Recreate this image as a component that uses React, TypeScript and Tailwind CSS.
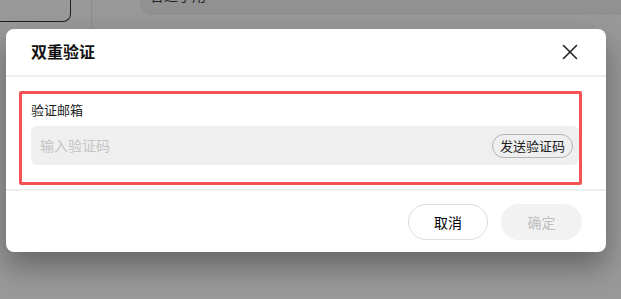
import { X } from 'lucide-react';

export default function App() {
  return (
    <div
      className="relative w-[621px] h-[299px] overflow-hidden bg-[#999999]"
      style={{ fontFamily: '"Noto Sans", "Noto Sans CJK SC", sans-serif' }}
    >
      {/* dimmed page behind the dialog */}
      <div className="flex items-start">
        <div className="w-[73px] h-[22px] -ml-[2px] border border-t-0 border-[#1f1f1f] rounded-br-lg" />
        <div className="w-px h-[40px] ml-[20px] bg-[#8c8c8c]" />
        <div className="flex-1 ml-[48px] h-[15px] bg-[#919191] rounded-bl-xl overflow-hidden pl-[10px]">
          <p className="text-[14px] leading-[14px] -mt-[11px] text-[#222]">合适于用</p>
        </div>
      </div>

      {/* dialog */}
      <div className="absolute left-[6px] top-[29px] w-[600px] bg-white rounded-lg shadow-[0_14px_30px_rgba(0,0,0,0.35)]">
        <div className="flex items-center justify-between h-[48px] pl-[25px] pr-[23px] border-b-2 border-[#eeeeee]">
          <h2 className="text-[16px] font-semibold text-[#111]">双重验证</h2>
          <X size={26} strokeWidth={1.4} className="text-[#222]" />
        </div>

        <div className="pt-[14px] pb-[4px] pl-[13px] pr-[24px] border-b-2 border-[#eeeeee]">
          <div className="border-[3px] border-[#f55353] rounded-[2px] pl-[9px] pt-[7px] pb-[17px]">
            <label className="block text-[13px] leading-[18px] text-[#222] mb-[7px]">验证邮箱</label>
            <div className="flex items-center justify-between h-[39px] bg-[#efefef] rounded-md pl-[9px] pr-[6px]">
              <span className="text-[14px] text-[#c4c4c4]">输入验证码</span>
              <button className="h-[24px] px-[7px] rounded-full border border-[#b5b5b5] text-[13px] leading-[20px] text-[#222]">
                发送验证码
              </button>
            </div>
          </div>
        </div>

        <div className="flex justify-end gap-[13px] pt-[13px] pb-[12px] pr-[24px]">
          <button className="w-[80px] h-[36px] rounded-full border border-[#dddddd] text-[14px] text-black">
            取消
          </button>
          <button className="w-[81px] h-[36px] rounded-full bg-[#f2f2f2] text-[14px] text-[#bdbdbd]">
            确定
          </button>
        </div>
      </div>
    </div>
  );
}
